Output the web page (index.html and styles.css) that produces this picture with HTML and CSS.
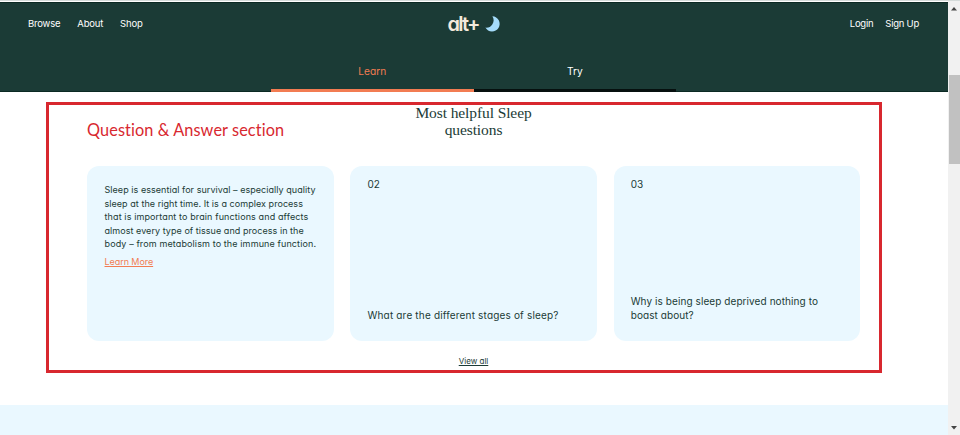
FILE: index.html
```html
<!DOCTYPE html>
<html lang="en">
<head>
<meta charset="utf-8">
<title>alt+ Sleep</title>
<link rel="stylesheet" href="styles.css">
</head>
<body>
<div class="window">
  <div class="page">
    <header class="header">
      <div class="topbar">
        <nav class="nav nav-left"><a>Browse</a><a>About</a><a>Shop</a></nav>
        <div class="logo">
          <span class="wordmark">alt+</span>
          <svg class="moon" viewBox="0 0 15 16"><path d="M7.4 0.3A7.6 7.6 0 1 1 0.4 11.6A7.4 7.4 0 0 0 7.4 0.3Z"/></svg>
        </div>
        <nav class="nav nav-right"><a>Login</a><a>Sign Up</a></nav>
      </div>
      <div class="tabs"><a class="tab active">Learn</a><a class="tab">Try</a></div>
    </header>
    <section class="questions">
      <div class="heading">
        <p class="note">Question &amp; Answer section</p>
        <h1 class="title">Most helpful Sleep<br>questions</h1>
      </div>
      <div class="cards">
        <article class="card answer">
          <p class="copy"><span class="line-a">Sleep is essential for survival – especially quality</span><br><span class="line-a">sleep at the right time. It is a complex process</span><br><span class="line-b">that is important to brain functions and affects</span><br><span class="line-a">almost every type of tissue and process in the</span><br><span class="line-b">body – from metabolism to the immune function.</span></p>
          <a class="more">Learn More</a>
        </article>
        <article class="card"><span class="number">02</span><p class="question">What are the different stages of sleep?</p></article>
        <article class="card third"><span class="number">03</span><p class="question last">Why is being sleep deprived nothing to<br>boast about?</p></article>
      </div>
      <a class="all">View all</a>
    </section>
    <div class="band"></div>
  </div>
  <aside class="scrollbar">
    <svg class="arrow" viewBox="0 0 6 4"><path d="M0 3.5 3 0 6 3.5Z"/></svg>
    <div class="thumb"></div>
    <svg class="arrow down" viewBox="0 0 6 4"><path d="M0 0H6L3 3.5Z"/></svg>
  </aside>
</div>
</body>
</html>
```
FILE: styles.css
```css
* { box-sizing: border-box; margin: 0; padding: 0; }
body {
  width: 960px; height: 435px; overflow: hidden; background: #fff; color: #1b3b36;
  font-family: Inter, "Liberation Sans", sans-serif; font-feature-settings: "cv11";
}
.window { display: flex; height: 435px; border-top: 1px solid #d5dbda; }
.page { width: 948px; display: flex; flex-direction: column; padding-top: 1px; }
.header { height: 90px; background: #1b3b36; border-top: 1px solid #0b2923; border-bottom: 1px solid #0b2923; display: flex; flex-direction: column; align-items: center; flex: none; }
.topbar { width: 100%; height: 50px; display: grid; grid-template-columns: 1fr auto 1fr; padding: 0 28px; flex: none; }
.nav { display: flex; gap: 17px; padding-top: 14px; font-size: 9.5px; line-height: 14px; color: #fff; white-space: nowrap; }
.nav-left { letter-spacing: -0.2px; }
.nav-right { justify-content: flex-end; gap: 12px; padding-right: 1px; letter-spacing: -0.25px; }
.logo { display: flex; width: 52px; height: 40px; padding-top: 12px; gap: 5px; }
.wordmark { width: 32px; font-size: 20px; line-height: 18px; font-weight: 600; letter-spacing: -1.7px; margin-left: -0.5px; margin-right: 0.5px; color: #f3eadc; white-space: nowrap; }
.moon { width: 15px; height: 16px; margin-top: 1px; fill: #a5dcfb; flex: none; }
.tabs { display: flex; width: 405px; height: 39px; margin: 0 1px -1px 0; }
.tab { flex: 1; text-align: center; padding-top: 10px; font-size: 10.2px; line-height: 16px; color: #fff; border-bottom: 3px solid #06100f; }
.tab.active { color: #f27c52; border-color: #f27c52; }
.questions { margin: 10px 0 0 46px; width: 836px; height: 271px; border: 3px solid #d8282f; padding: 0 19px 0 38px; display: flex; flex-direction: column; align-items: center; flex: none; }
.heading { display: grid; grid-template-columns: 280px 213px 280px; height: 61px; width: 773px; flex: none; }
.note { font-family: Lato, sans-serif; font-variant-ligatures: none; color: #d8282f; font-size: 16.3px; letter-spacing: 0.1px; line-height: 20px; padding-top: 15px; white-space: nowrap; }
.title { margin-top: -1px; font-family: "Liberation Serif", serif; font-weight: 400; font-size: 15.5px; letter-spacing: -0.1px; line-height: 17px; text-align: center; color: #1b3b36; white-space: nowrap; }
.cards { display: grid; grid-template-columns: repeat(3, 247px); gap: 16px; height: 175px; width: 773px; flex: none; }
.card { background: #eaf8ff; border-radius: 12px; padding: 11px 17px 19px 17.5px; display: flex; flex-direction: column; justify-content: space-between; white-space: nowrap; }
.card.third { margin-left: 1px; padding-left: 16.7px; }
.card.answer { justify-content: flex-start; align-items: flex-start; padding-top: 17px; }
.copy { font-size: 9px; line-height: 13.5px; }
.line-a { letter-spacing: 0.05px; }
.line-b { letter-spacing: 0.12px; }
.more { font-size: 9px; letter-spacing: -0.06px; line-height: 14px; color: #f27c52; text-decoration: underline; margin-top: 4px; }
.number { font-size: 10px; line-height: 14px; }
.question { font-size: 10px; letter-spacing: 0.17px; line-height: 14px; }
.question.last { letter-spacing: 0.08px; line-height: 13.5px; }
.all { font-size: 8px; line-height: 12px; text-decoration: underline; margin-top: 14px; }
.band { height: 30px; margin-top: 32px; background: #eaf8ff; flex: none; }
.scrollbar { width: 12px; background: #f1f1f1; display: flex; flex-direction: column; align-items: center; padding: 6px 0 5px; }
.arrow { width: 6px; height: 4px; fill: #444; }
.thumb { width: 11px; height: 89px; margin-top: 64px; background: #c1c1c1; }
.down { margin-top: auto; }
```
